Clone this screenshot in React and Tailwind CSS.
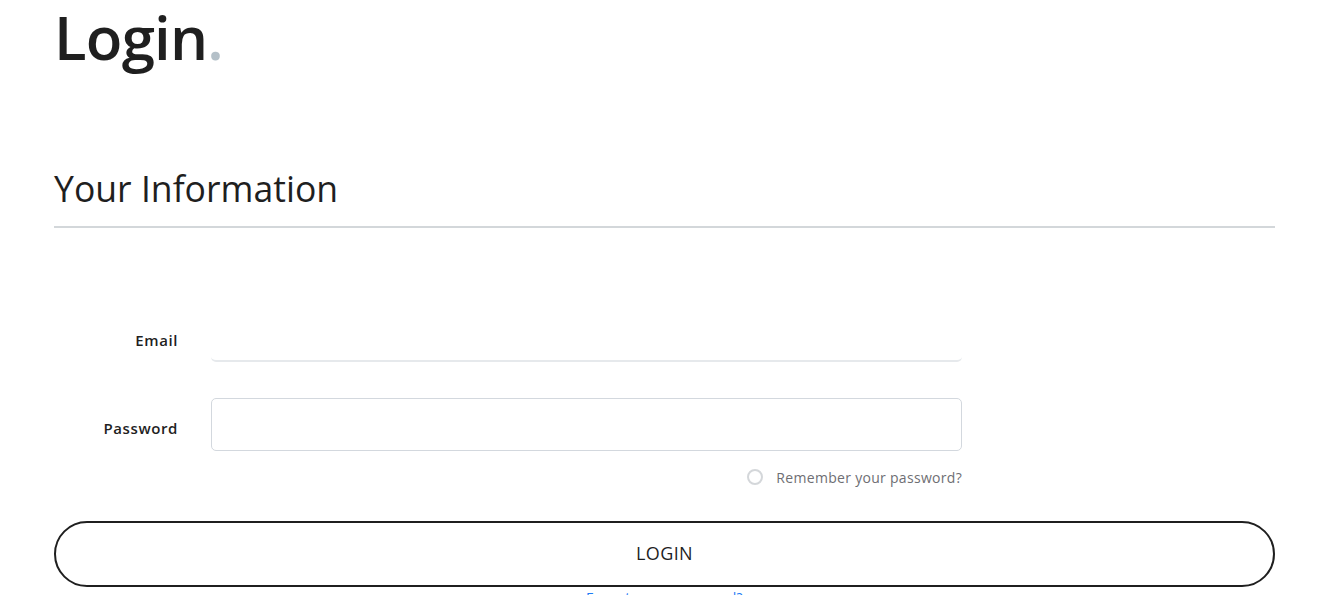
import { useState } from "react";

const App = () => {
  const [remember, setRemember] = useState(false);

  return (
    <div className="min-h-screen bg-white font-['Open_Sans',sans-serif] text-[#1f1f1f]">
      <div className="pl-[54px] pr-[59px]">
        {/* TITLE */}
        <h1 className="mt-[7px] text-[60px] leading-none font-semibold tracking-[-0.8px]">
          Login<span className="text-[#b4c0c8]">.</span>
        </h1>

        {/* SECTION HEADER */}
        <h2 className="mt-[104px] text-[35.6px] leading-none font-normal">
          Your Information
        </h2>
        <div className="mt-[19px] h-[2px] bg-[#d3d7da]" />

        {/* FORM */}
        <form className="mt-[92px]" onSubmit={(e) => e.preventDefault()}>
          <div className="flex items-center">
            <label className="w-[124px] text-right text-[15px] font-semibold tracking-[0.6px]">
              Email
            </label>
            <input
              type="email"
              className="ml-[33px] h-[42px] w-[751px] rounded-b-[5px] border-b-2 border-[#e6e9ec] outline-none"
            />
          </div>

          <div className="mt-[36px] flex items-center">
            <label className="mt-[8px] w-[124px] text-right text-[15px] font-semibold tracking-[0.6px]">
              Password
            </label>
            <input
              type="password"
              className="ml-[33px] h-[53px] w-[751px] rounded-[5px] border border-[#d3d8de] outline-none"
            />
          </div>

          <div className="mt-[16px] flex w-[908px] justify-end">
            <label className="flex items-center gap-[13px] text-[14px] tracking-[0.3px] text-[#6e6e73]">
              <button
                type="button"
                onClick={() => setRemember(!remember)}
                className="h-[16px] w-[16px] rounded-full border-2 border-[#d4d7da] bg-white"
              />
              Remember your password?
            </label>
          </div>

          <button
            type="submit"
            className="mt-[33px] h-[66px] w-full rounded-full border-2 border-[#1f1f1f] text-[18px] font-medium tracking-[0.4px]"
          >
            LOGIN
          </button>

          <p className="mt-0 text-center text-[14px] tracking-[0.4px] text-[#1e7bf5]">
            <a href="#">Forgot your password?</a>
          </p>
        </form>
      </div>
    </div>
  );
};

export default App;
